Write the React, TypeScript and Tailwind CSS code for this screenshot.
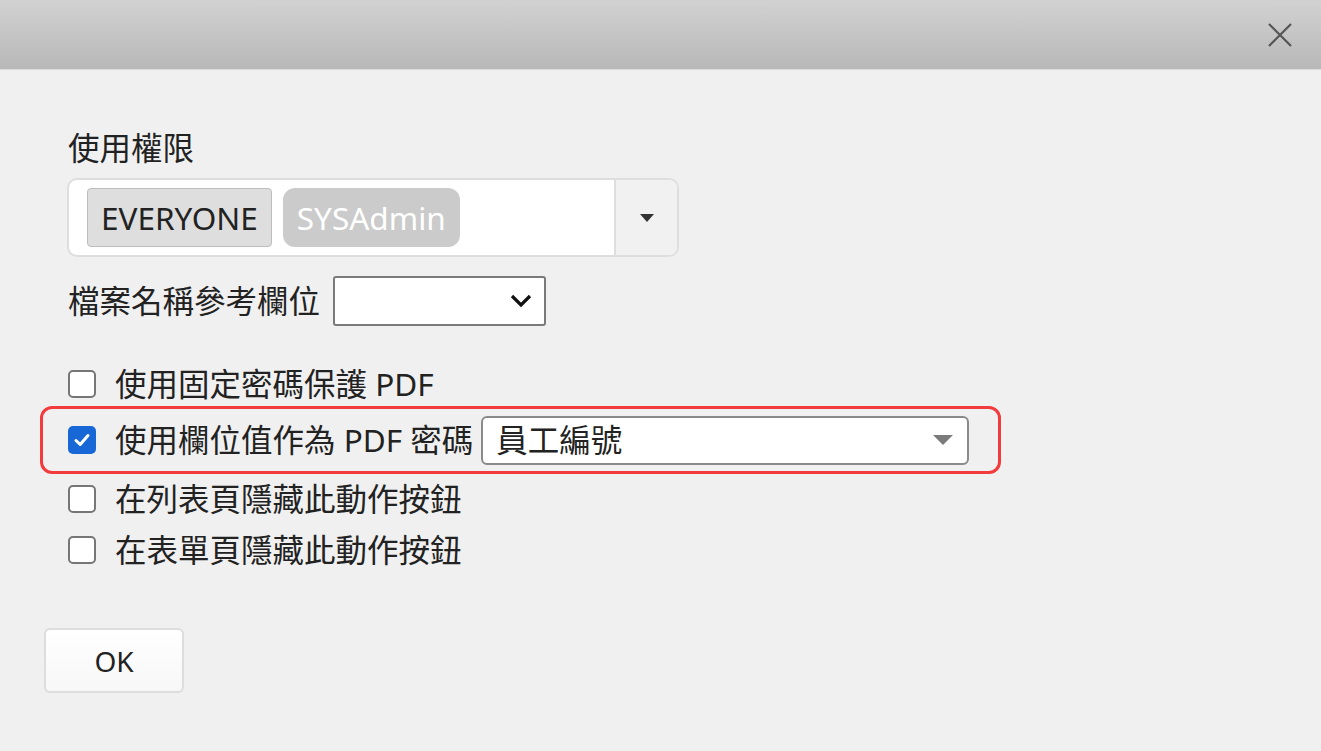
import React from 'react';

const font = { fontFamily: '"Noto Sans", "Noto Sans CJK TC", sans-serif' };

function Checkbox({ checked }: { checked?: boolean }) {
  if (checked) {
    return (
      <div className="w-[28px] h-[28px] rounded-[5px] bg-[#1767d6] flex items-center justify-center shrink-0">
        <svg width="20" height="20" viewBox="0 0 20 20">
          <path d="M4 10.5 L8.2 14.5 L16 5.5" fill="none" stroke="#fff" strokeWidth="3" strokeLinecap="round" strokeLinejoin="round" />
        </svg>
      </div>
    );
  }
  return <div className="w-[28px] h-[28px] rounded-[5px] border-2 border-[#767676] bg-white shrink-0" />;
}

export default function App() {
  return (
    <div className="w-[1321px] h-[751px] bg-[#f0f0f0] text-[#222] flex flex-col overflow-hidden" style={font}>
      {/* 標題列 */}
      <div className="h-[70px] shrink-0 bg-gradient-to-b from-[#d2d2d2] to-[#b8b8b8] border-b border-[#dcdcdc] flex items-center justify-end pr-[28px]">
        <svg width="26" height="26" viewBox="0 0 26 26">
          <path d="M2 2 L24 24 M24 2 L2 24" stroke="#555" strokeWidth="2.2" />
        </svg>
      </div>

      <div className="flex flex-col pl-[68px] pt-[58px]">
        <div className="text-[31.5px] leading-[40px]">使用權限</div>

        {/* 多選框 */}
        <div className="mt-[10px] ml-[-1px] w-[612px] h-[79px] bg-white border-2 border-[#dedede] rounded-[10px] flex overflow-hidden">
          <div className="flex-1 flex items-center gap-[11px] pl-[18px]">
            <div className="h-[59px] px-[13px] flex items-center bg-[#dedede] border border-[#bdbdbd] rounded-[4px] text-[31.5px] text-[#222]">
              EVERYONE
            </div>
            <div className="h-[59px] px-[14px] flex items-center bg-[#cbcbcb] rounded-[12px] text-[31.5px] text-white">
              SYSAdmin
            </div>
          </div>
          <div className="w-[63px] border-l-2 border-[#dedede] bg-[#f1f1f1] flex items-center justify-center">
            <svg width="16" height="10" viewBox="0 0 16 10">
              <path d="M1 1 L15 1 L8 9 Z" fill="#333" />
            </svg>
          </div>
        </div>

        {/* 檔案名稱參考欄位 */}
        <div className="mt-[19px] flex items-center gap-[13px]">
          <span className="text-[31.5px] leading-[40px]">檔案名稱參考欄位</span>
          <div className="w-[213px] h-[50px] bg-white border-2 border-[#7a7a7a] rounded-[3px] flex items-center justify-end pr-[12px]">
            <svg width="22" height="14" viewBox="0 0 22 14">
              <path d="M2 2 L11 11 L20 2" fill="none" stroke="#111" strokeWidth="3.2" />
            </svg>
          </div>
        </div>

        {/* 選項 */}
        <div className="mt-[38px] flex items-center gap-[19px] h-[40px]">
          <Checkbox />
          <span className="text-[31.5px] leading-[40px]">使用固定密碼保護 PDF</span>
        </div>

        <div className="mt-[2px] ml-[-28px] w-[961px] h-[68px] border-[3px] border-[#f23b3d] rounded-[12px] flex items-center pl-[25px]">
          <Checkbox checked />
          <span className="ml-[19px] text-[31.5px] leading-[40px]">使用欄位值作為 PDF 密碼</span>
          <div className="ml-[8px] w-[488px] h-[49px] bg-white border-2 border-[#8a8a8a] rounded-[6px] flex items-center justify-between pl-[13px] pr-[13px]">
            <span className="text-[31.5px] leading-[40px]">員工編號</span>
            <svg width="22" height="12" viewBox="0 0 22 12">
              <path d="M1 1 L21 1 L11 11 Z" fill="#7b7b7b" />
            </svg>
          </div>
        </div>

        <div className="mt-[5px] flex items-center gap-[19px] h-[40px]">
          <Checkbox />
          <span className="text-[31.5px] leading-[40px]">在列表頁隱藏此動作按鈕</span>
        </div>
        <div className="mt-[11px] flex items-center gap-[19px] h-[40px]">
          <Checkbox />
          <span className="text-[31.5px] leading-[40px]">在表單頁隱藏此動作按鈕</span>
        </div>

        <button className="mt-[58px] ml-[-24px] w-[140px] h-[65px] bg-gradient-to-b from-white to-[#f7f7f7] border-2 border-[#dddddd] rounded-[6px] text-[28px] text-[#222] flex items-center justify-center">
          OK
        </button>
      </div>
    </div>
  );
}
